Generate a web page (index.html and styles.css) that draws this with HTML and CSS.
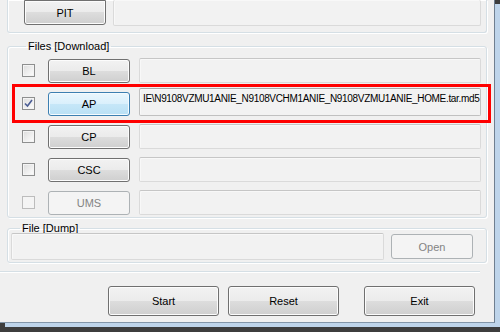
FILE: index.html
```html
<!DOCTYPE html>
<html lang="en">

<head>
    <meta charset="UTF-8">
    <meta name="viewport" content="width=device-width, initial-scale=1.0">
    <title>Odin</title>
    <link rel="stylesheet" href="styles.css">
</head>

<body>
    <div class="window">
        <!-- PIT group (top cut off) -->
        <div class="group group-pit">
            <button class="btn btn-pit">PIT</button>
            <div class="field"></div>
        </div>

        <!-- Files -->
        <fieldset class="group group-files">
            <legend>Files [Download]</legend>
            <div class="file-row">
                <span class="check"></span>
                <button class="btn btn-file">BL</button>
                <div class="field"></div>
            </div>
            <div class="file-row">
                <span class="check checked">
                    <svg width="9" height="9" viewBox="0 0 9 9"><path d="M1 4.5 L3.5 7 L8 1" fill="none" stroke="#4b5d94" stroke-width="1.6"/></svg>
                </span>
                <button class="btn btn-file focus">AP</button>
                <div class="field filled">IE\N9108VZMU1ANIE_N9108VCHM1ANIE_N9108VZMU1ANIE_HOME.tar.md5</div>
            </div>
            <div class="file-row">
                <span class="check"></span>
                <button class="btn btn-file">CP</button>
                <div class="field"></div>
            </div>
            <div class="file-row">
                <span class="check"></span>
                <button class="btn btn-file">CSC</button>
                <div class="field"></div>
            </div>
            <div class="file-row">
                <span class="check disabled"></span>
                <button class="btn btn-file disabled">UMS</button>
                <div class="field"></div>
            </div>
        </fieldset>

        <!-- Dump -->
        <fieldset class="group group-dump">
            <legend>File [Dump]</legend>
            <div class="dump-row">
                <div class="field dump-field"></div>
                <button class="btn btn-open disabled">Open</button>
            </div>
        </fieldset>

        <div class="separator"></div>

        <div class="actions">
            <button class="btn btn-action">Start</button>
            <button class="btn btn-action btn-reset">Reset</button>
            <button class="btn btn-action btn-exit">Exit</button>
        </div>

        <!-- highlight around the AP row -->
        <div class="highlight"></div>
    </div>
</body>

</html>
```

FILE: styles.css
```css
body {
    margin: 0;
    padding: 0;
    width: 500px;
    height: 332px;
    overflow: hidden;
    background-color: #3d3d3d;
    font-family: "Liberation Sans", Arial, sans-serif;
    font-size: 11px;
}

.window {
    position: relative;
    width: 494px;
    height: 322px;
    background-color: #f0f0f0;
    border-right: 1px solid #6f7f90;
    border-bottom: 1px solid #8295a8;
    box-shadow: 5px 4px 0 #bed4ea;
}

/* group boxes */
.group {
    box-sizing: border-box;
    margin: 0 0 0 7px;
    width: 480px;
    border: 1px solid #d5dfe5;
    border-radius: 3px;
    box-shadow: inset 1px 1px 0 #ffffff, 1px 1px 0 #ffffff;
}

.group legend {
    margin-left: 4px;
    padding: 0 2px;
    font-size: 11px;
    color: #000;
}

.group-pit {
    display: flex;
    align-items: flex-start;
    height: 33px;
    border-top: none;
    border-radius: 0 0 3px 3px;
    padding: 0 5px 0 16px;
}

.group-files {
    margin-top: 7px;
    padding: 6px 5px 2px 14px;
}

.group-files legend {
    line-height: 12px;
}

.group-dump {
    margin-top: 8px;
    padding: 3px 2px 2px 3px;
}

.group-dump legend {
    margin-left: 9px;
    line-height: 4px;
}

/* buttons */
.btn {
    box-sizing: border-box;
    padding: 0;
    border: 1px solid #707070;
    border-radius: 3px;
    background: linear-gradient(#f2f2f2 0%, #ebebeb 50%, #dddddd 50%, #cfcfcf 100%);
    box-shadow: inset 0 0 0 1px #fcfcfc;
    font-family: "Liberation Sans", Arial, sans-serif;
    font-size: 11px;
    color: #000;
}

.btn.focus {
    border-color: #3c7fb1;
    background: linear-gradient(#eaf6fd 0%, #d9f0fc 50%, #c6e7f8 50%, #b9e0f5 100%);
    box-shadow: inset 0 0 0 1px #f4fbff;
}

.btn.disabled {
    border-color: #adb2b5;
    background: #f4f4f4;
    box-shadow: none;
    color: #838383;
}

.btn-pit {
    width: 82px;
    height: 25px;
    margin-right: 7px;
    border-top-left-radius: 0;
    border-top-right-radius: 0;
}

.btn-file {
    flex: none;
    width: 82px;
    height: 24px;
    margin: 0 9px 0 13px;
}

.btn-open {
    width: 82px;
    height: 25px;
    margin: 1px 0 0 7px;
}

.btn-action {
    width: 111px;
    height: 30px;
}

/* fields */
.field {
    box-sizing: border-box;
    flex: 1;
    min-width: 0;
    height: 25px;
    border: 1px solid #dadada;
    border-top-color: #c6c6c6;
    border-radius: 2px;
    background-color: #f2f2f2;
    box-shadow: inset 1px 1px 0 #f8f8f8;
}

.group-pit .field {
    height: 26px;
    border-top: none;
}

.field.filled {
    height: 28px;
    margin-top: -3px;
    border-color: #c0c0c0;
    border-top-color: #a9a9a9;
    padding: 4px 0 0 3px;
    color: #000;
    font-size: 10px;
    letter-spacing: -0.33px;
    white-space: nowrap;
    overflow: hidden;
}

.dump-row {
    display: flex;
    align-items: flex-start;
}

.dump-field {
    flex: none;
    width: 373px;
    height: 27px;
}

/* checkboxes */
.file-row {
    display: flex;
    align-items: center;
    height: 25px;
    margin-bottom: 8px;
}

.file-row:last-child {
    margin-bottom: 0;
}

.check {
    flex: none;
    box-sizing: border-box;
    display: flex;
    align-items: center;
    justify-content: center;
    width: 13px;
    height: 13px;
    border: 1px solid #8e8f8f;
    background: linear-gradient(135deg, #dcdcdc, #fefefe);
    box-shadow: inset 0 0 0 1px #f4f4f4;
}

.check.disabled {
    border-color: #bcbcbc;
    background: #f4f4f4;
    box-shadow: none;
}

.separator {
    margin-top: 8px;
    width: 480px;
    height: 1px;
    background-color: #d5dfe5;
    border-bottom: 1px solid #ffffff;
}

.actions {
    display: flex;
    margin: 13px 0 0 108px;
}

.btn-reset {
    margin-left: 9px;
}

.btn-exit {
    margin-left: 25px;
}

/* red annotation box */
.highlight {
    position: absolute;
    left: 12px;
    top: 84px;
    width: 473px;
    height: 33px;
    border: 3px solid #ff0000;
}
```
